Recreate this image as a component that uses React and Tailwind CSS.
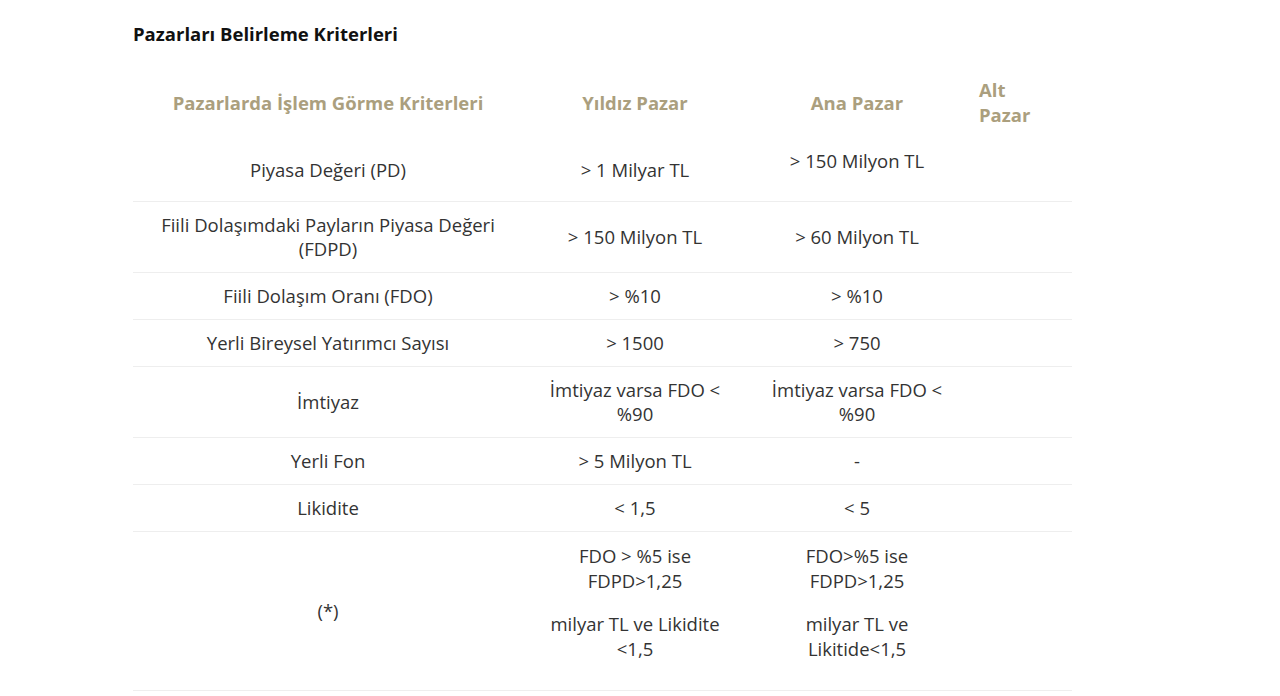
export default function App() {
  const font = { fontFamily: '"Open Sans", sans-serif' };
  const rows = [
    { c: ['Piyasa Değeri (PD)', '> 1 Milyar TL', '> 150 Milyon TL'], p3: true },
    { c: ['Fiili Dolaşımdaki Payların Piyasa Değeri (FDPD)', '> 150 Milyon TL', '> 60 Milyon TL'] },
    { c: ['Fiili Dolaşım Oranı (FDO)', '> %10', '> %10'] },
    { c: ['Yerli Bireysel Yatırımcı Sayısı', '> 1500', '> 750'] },
    { c: ['İmtiyaz', 'İmtiyaz varsa FDO < %90', 'İmtiyaz varsa FDO < %90'] },
    { c: ['Yerli Fon', '> 5 Milyon TL', '-'] },
    { c: ['Likidite', '< 1,5', '< 5'] },
  ];
  return (
    <div className="w-[1280px] h-[696px] bg-white overflow-hidden text-[#333333]" style={font}>
      <div className="pl-[133px] pt-[22px]">
        <h2 className="text-[18.5px] font-bold leading-6 text-[#111111]">Pazarları Belirleme Kriterleri</h2>
        <table className="mt-5 w-[939px] table-fixed border-collapse text-[18.5px] leading-6">
          <colgroup>
            <col className="w-[390px]" />
            <col className="w-[224px]" />
            <col className="w-[220px]" />
            <col className="w-[105px]" />
          </colgroup>
          <thead>
            <tr className="text-[#ab9f7e] font-bold leading-[25px]">
              <th className="px-3 py-[11px] text-center align-middle">Pazarlarda İşlem Görme Kriterleri</th>
              <th className="px-3 py-[11px] text-center align-middle">Yıldız Pazar</th>
              <th className="px-3 py-[11px] text-center align-middle">Ana Pazar</th>
              <th className="px-3 py-[11px] text-left align-middle">Alt Pazar</th>
            </tr>
          </thead>
          <tbody>
            {rows.map((r, i) => (
              <tr key={i} className="border-b border-[#eeeeee]">
                <td className="px-3 py-[11px] text-center align-middle">{r.c[0]}</td>
                <td className="px-3 py-[11px] text-center align-middle">{r.c[1]}</td>
                <td className="px-3 py-[11px] text-center align-middle">
                  {r.p3 ? <p className="mb-[17px]">{r.c[2]}</p> : r.c[2]}
                </td>
                <td className="px-3 py-[11px]"></td>
              </tr>
            ))}
            <tr className="border-b border-[#eeeeee]">
              <td className="px-3 py-[11px] text-center align-middle">(*)</td>
              <td className="px-3 py-[11px] text-center align-middle leading-[25px]">
                <p className="mb-[18px]">FDO &gt; %5 ise FDPD&gt;1,25</p>
                <p className="mb-[18px]">milyar TL ve Likidite &lt;1,5</p>
              </td>
              <td className="px-3 py-[11px] text-center align-middle leading-[25px]">
                <p className="mb-[18px]">FDO&gt;%5 ise FDPD&gt;1,25</p>
                <p className="mb-[18px]">milyar TL ve Likitide&lt;1,5</p>
              </td>
              <td className="px-3 py-[11px]"></td>
            </tr>
          </tbody>
        </table>
      </div>
    </div>
  );
}
